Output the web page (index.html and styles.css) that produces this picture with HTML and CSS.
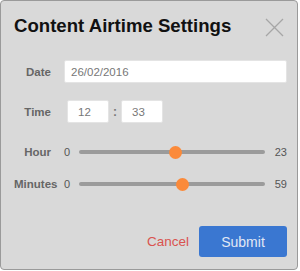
FILE: index.html
```html
<!DOCTYPE html>
<html lang="en">
<head>
  <meta charset="UTF-8">
  <title>Content Airtime Settings</title>
  <link rel="stylesheet" href="styles.css">
</head>
<body>
  <div class="dialog">
    <div class="dialog-header">
      <h1 class="title">Content Airtime Settings</h1>
      <button class="close" type="button" aria-label="Close">
        <svg width="19" height="19" viewBox="0 0 19 19">
          <path d="M1 1 L18 18 M18 1 L1 18" stroke="#a6a6a6" stroke-width="1.3" fill="none"/>
        </svg>
      </button>
    </div>

    <div class="form">
      <label class="label">Date</label>
      <input class="field date-field" type="text" value="26/02/2016">

      <label class="label">Time</label>
      <div class="time-inputs">
        <input class="field time-field" type="text" value="12">
        <span class="colon">:</span>
        <input class="field time-field" type="text" value="33">
      </div>

      <label class="label slider-label">Hour</label>
      <div class="slider">
        <span class="min">0</span>
        <div class="track"><span class="thumb" style="left: 52.17%"></span></div>
        <span class="max">23</span>
      </div>

      <label class="label slider-label">Minutes</label>
      <div class="slider">
        <span class="min">0</span>
        <div class="track"><span class="thumb" style="left: 55.93%"></span></div>
        <span class="max">59</span>
      </div>
    </div>

    <div class="actions">
      <a class="cancel" href="#">Cancel</a>
      <button class="submit" type="button">Submit</button>
    </div>
  </div>
</body>
</html>
```

FILE: styles.css
```css
* {
  box-sizing: border-box;
  font-family: 'Liberation Sans', Arial, sans-serif;
}

body {
  margin: 0;
  background-color: #fff;
}

.dialog {
  width: 298px;
  height: 270px;
  border: 1px solid #9a9a9a;
  border-radius: 4px;
  background-color: #d9d9d9;
  display: flex;
  flex-direction: column;
  padding: 12px 10px 12px 13px;
}

.dialog-header {
  display: flex;
  justify-content: space-between;
  align-items: center;
  height: 26px;
}

.title {
  margin: 0;
  font-size: 18.6px;
  line-height: 26px;
  font-weight: bold;
  color: #111;
}

.close {
  border: none;
  background: none;
  padding: 0;
  margin: 2px 3px 0 0;
  width: 19px;
  height: 19px;
  cursor: pointer;
}

.close svg {
  display: block;
}

.form {
  display: grid;
  grid-template-columns: 37px 1fr;
  column-gap: 13px;
  align-items: center;
  margin-top: 21px;
}

.label {
  font-size: 11.5px;
  font-weight: bold;
  color: #666;
  text-align: right;
  white-space: nowrap;
}

.field {
  height: 23px;
  border: 1px solid #e4e4e4;
  border-radius: 2px;
  background-color: #fff;
  font-size: 11.5px;
  color: #777;
  outline: none;
}

.date-field {
  width: 100%;
  padding: 0 6px;
}

.time-inputs {
  display: flex;
  align-items: center;
  margin-left: 3px;
  margin-top: 17px;
}

.time-inputs + .label,
.form > .label:nth-child(3) {
  margin-top: 17px;
}

.time-field {
  width: 42px;
  padding: 0 10px;
}

.colon {
  width: 12px;
  text-align: center;
  font-size: 12px;
  font-weight: bold;
  color: #777;
}

.slider-label {
  height: 20px;
  line-height: 20px;
}

.slider {
  display: flex;
  align-items: center;
  height: 20px;
  font-size: 11px;
  color: #555;
}

.form > .slider-label:nth-child(5),
.form > .slider:nth-child(6) {
  margin-top: 19px;
}

.form > .slider-label:nth-child(7),
.form > .slider:nth-child(8) {
  margin-top: 12px;
}

.min {
  width: 6px;
}

.track {
  position: relative;
  flex: 1;
  height: 4px;
  margin: 0 10px 0 9px;
  border-radius: 2px;
  background-color: #9b9b9b;
}

.thumb {
  position: absolute;
  top: 50%;
  width: 13px;
  height: 13px;
  margin: -6.5px 0 0 -6.5px;
  border-radius: 50%;
  background-color: #fb8a3a;
}

.actions {
  margin-top: auto;
  display: flex;
  justify-content: flex-end;
  align-items: center;
  gap: 10px;
}

.cancel {
  font-size: 13.5px;
  color: #d9534f;
  text-decoration: none;
}

.submit {
  width: 88px;
  height: 31px;
  border: none;
  border-radius: 3px;
  background-color: #3a77d1;
  color: #e1e8f5;
  font-size: 14px;
  cursor: pointer;
}
```
